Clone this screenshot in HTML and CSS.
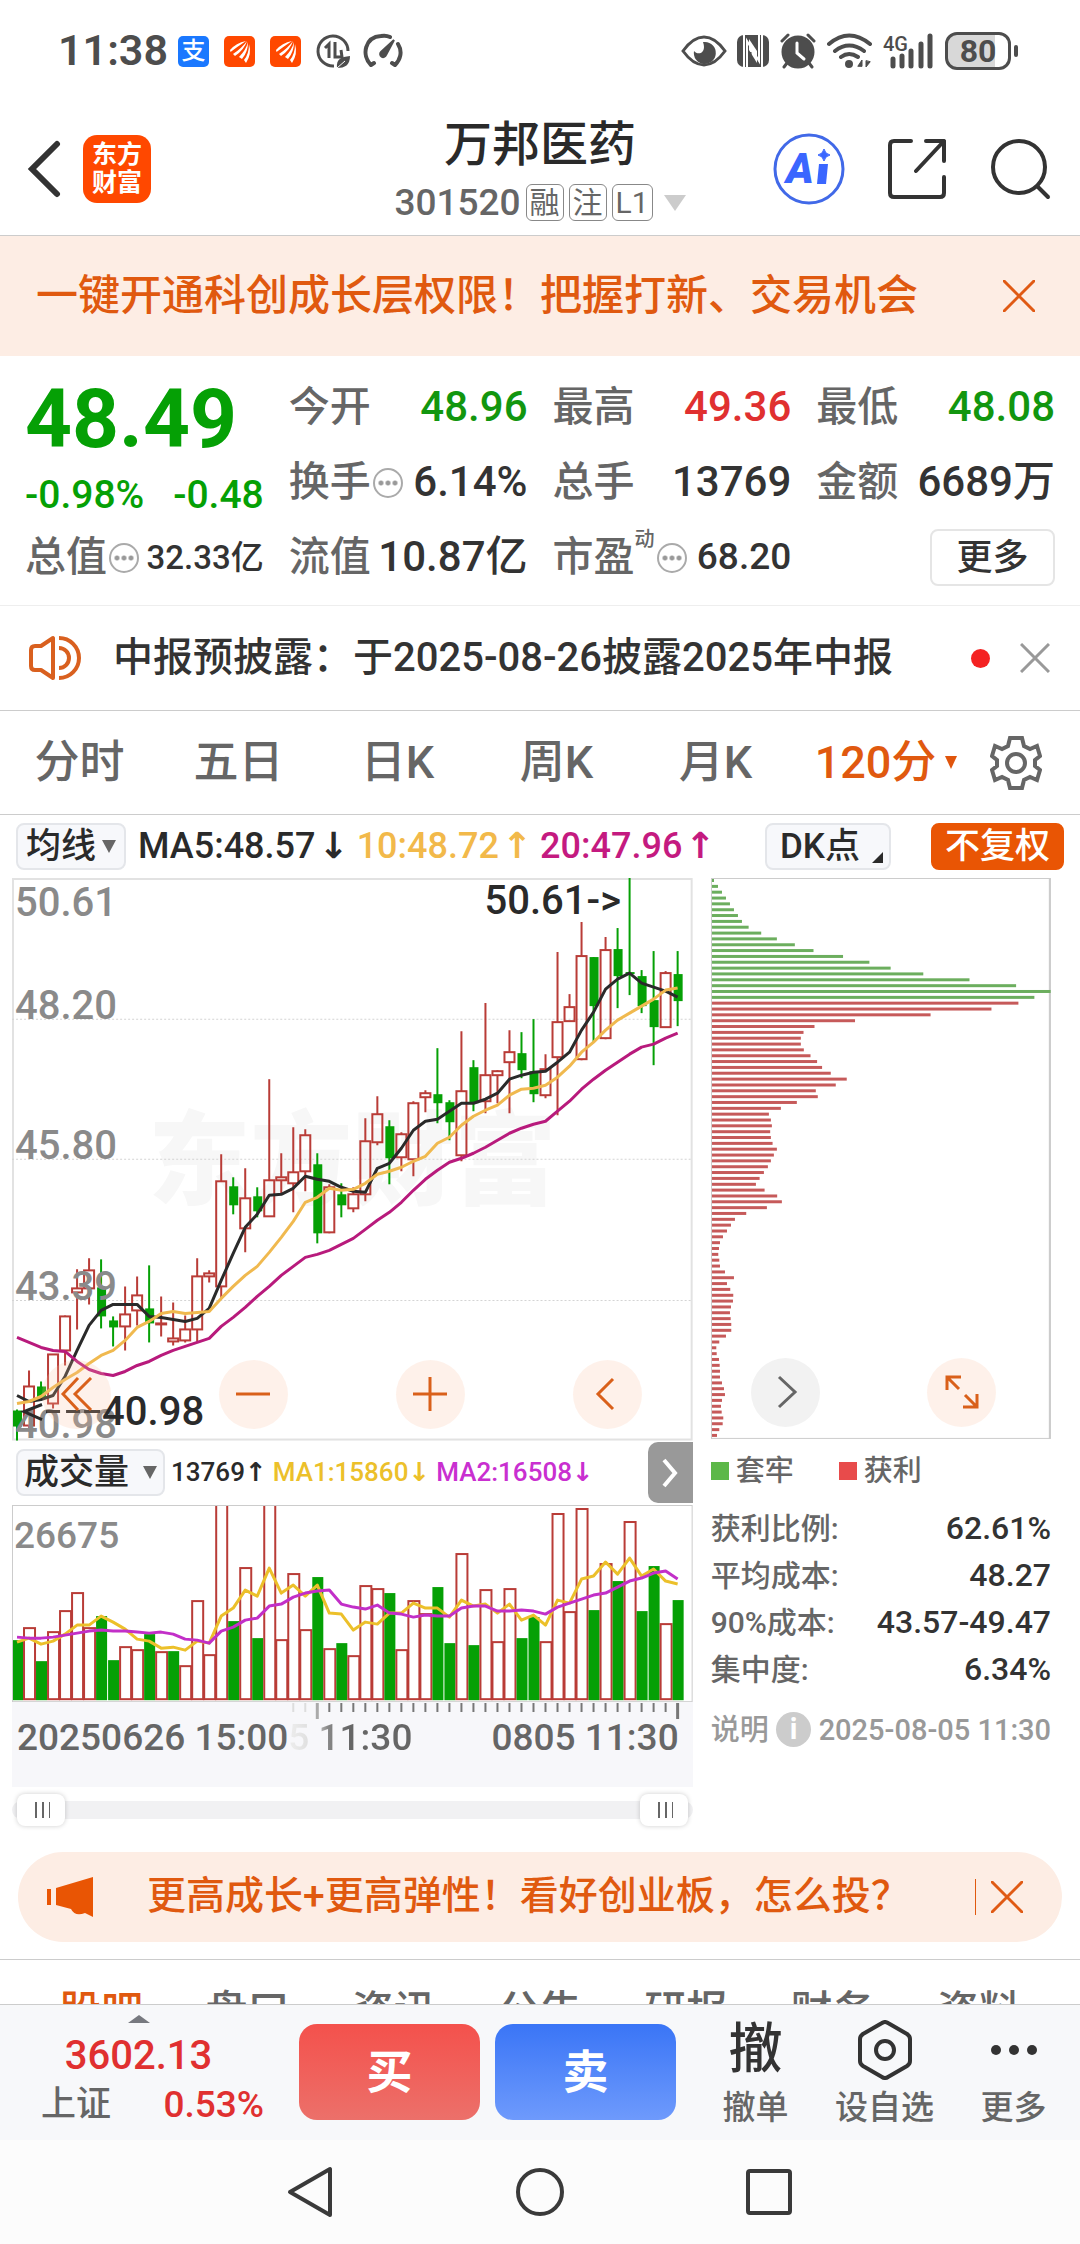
FILE: index.html
```
<!DOCTYPE html>
<html lang="zh-CN">
<head>
    <meta charset="UTF-8">
    <meta name="viewport" content="width=device-width, initial-scale=1.0">
    <title>万邦医药 301520</title>
    <link rel="stylesheet" href="styles.css">
</head>
<body>
    <div class="status-bar">
        <span class="clock">11:38</span>
        <span class="app-dot blue">支</span>
        <svg class="app-dot" width="31" height="31" viewBox="0 0 31 31"><path fill="#fff" d="M6 14Q12 7 22 5Q13 11 6.500 16ZM9 18Q18 12 23 5Q20 14 11 20ZM15 21Q22 14 24 6Q24 16 18 23ZM20 24Q25 18 25 8Q28 18 22 27Z"/></svg>
        <svg class="app-dot" width="31" height="31" viewBox="0 0 31 31"><path fill="#fff" d="M6 14Q12 7 22 5Q13 11 6.500 16ZM9 18Q18 12 23 5Q20 14 11 20ZM15 21Q22 14 24 6Q24 16 18 23ZM20 24Q25 18 25 8Q28 18 22 27Z"/></svg>
        <svg width="36" height="36" viewBox="0 0 36 36" fill="none" stroke="#4d4d4d" stroke-width="3">
            <path d="M32 18A15 15 0 1 0 18 33"/>
            <path d="M9 15L13 11V25M19 9V24H26L25 17" stroke-width="3"/>
            <path d="M21 35C20 26 25 24 34 23C34 32 29 35 21 35Z" fill="#4d4d4d" stroke="none"/>
            <path d="M21 35L29 28" stroke="#fff" stroke-width="1"/>
        </svg>
        <svg width="42" height="36" viewBox="0 0 42 36" fill="none" stroke="#4d4d4d" stroke-width="4" stroke-linecap="round">
            <path d="M9 32C-1 22 3 4 19 3Q24 2 28 4M36 11C41 19 38 27 33 32M9 32L12 30M33 32L30 30"/>
            <path d="M32 7L24 22A3 3 0 1 1 19 19Z" fill="#4d4d4d" stroke-width="2"/>
        </svg>
        <svg class="push" width="46" height="34" viewBox="0 0 46 34">
            <path d="M2 17Q12 3 23 3T44 17Q34 31 23 31T2 17Z" fill="none" stroke="#4d4d4d" stroke-width="3"/>
            <path d="M24 8A11 11 0 1 1 13 17C17 22 26 19 22 8Z" fill="#4d4d4d"/>
        </svg>
        <svg width="32" height="34" viewBox="0 0 32 34">
            <rect x="0" y="1" width="32" height="32" rx="7" fill="#4d4d4d"/>
            <path d="M7 1V33M10 33V7L22 27V1M25 33V1" fill="none" stroke="#fff" stroke-width="2"/>
            <path d="M12 16L20 29V17L12 5Z" fill="#fff"/>
            <path d="M13 18V29" stroke="#4d4d4d" stroke-width="3"/>
        </svg>
        <svg width="38" height="36" viewBox="0 0 38 36" fill="none" stroke="#4d4d4d" stroke-width="3" stroke-linecap="round">
            <circle cx="19" cy="19" r="15" fill="#4d4d4d"/>
            <path d="M3 8L9 2M35 8L29 2M8 30L5 34M30 30L33 34"/>
            <path d="M18 10V20L25 26" stroke="#fff"/>
        </svg>
        <svg width="46" height="36" viewBox="0 0 46 36" fill="none" stroke="#4d4d4d" stroke-width="4" stroke-linecap="round">
            <path d="M2 11Q22 -6 43 11M8 18Q22 7 37 18M14 24Q22 18 31 24"/>
            <circle cx="22" cy="31" r="2"/>
            <path d="M35 33V27L31 33ZM39 28V34L43 29Z" stroke-width="1" fill="#4d4d4d"/>
        </svg>
        <svg width="52" height="36" viewBox="0 0 52 36">
            <text x="0" y="18" class="net">4G</text>
            <path d="M10 26V33M19 23V33M28 18V33M38 11V33M47 3V33" stroke="#4d4d4d" stroke-width="5" stroke-linecap="round"/>
        </svg>
        <span class="battery">80</span>
    </div>

    <header class="header">
        <div class="header-side">
            <button class="icon-btn" aria-label="返回">
                <svg width="34" height="58" viewBox="0 0 34 58" fill="none" stroke="#333" stroke-width="6" stroke-linecap="round"><path d="M30 4L5 29L30 54"/></svg>
            </button>
            <a href="#" class="brand">东方<br>财富</a>
        </div>
        <div class="header-title">
            <h1>万邦医药</h1>
            <div class="code">
                <span>301520</span><span class="badge">融</span><span class="badge">注</span><span class="badge">L1</span>
                <svg width="22" height="16" viewBox="0 0 22 16"><path d="M0 0H22L11 16Z" fill="#ccc"/></svg>
            </div>
        </div>
        <div class="header-side right">
            <button class="icon-btn" aria-label="Ai">
                <svg width="72" height="72" viewBox="0 0 72 72">
                    <circle cx="36" cy="36" r="34" fill="none" stroke="#4169e8" stroke-width="3"/>
                    <text x="13" y="50" class="ai">A</text>
                    <path d="M46 31H55L53 51H44Z" fill="#3a66ff"/>
                    <path d="M51 16Q52 21 57 22Q52 23 51 28Q50 23 45 22Q50 21 51 16Z" fill="#3a66ff" stroke="#3a66ff"/>
                </svg>
            </button>
            <button class="icon-btn" aria-label="分享">
                <svg width="60" height="60" viewBox="0 0 60 60" fill="none" stroke="#333" stroke-width="4" stroke-linecap="round" stroke-linejoin="round"><path d="M23 2H6Q2 2 2 6V54Q2 58 6 58H52Q56 58 56 54V38M38 2H56V22M56 2L28 32"/></svg>
            </button>
            <button class="icon-btn" aria-label="搜索">
                <svg width="60" height="62" viewBox="0 0 60 62" fill="none" stroke="#333" stroke-width="4" stroke-linecap="round"><circle cx="28" cy="29" r="26"/><path d="M47 49L57 59"/></svg>
            </button>
        </div>
    </header>

    <div class="notice">
        <a href="#">一键开通科创成长层权限！把握打新、交易机会</a>
        <button class="icon-btn" aria-label="关闭"><svg width="32" height="32" viewBox="0 0 32 32" stroke="#e05a14" stroke-width="3"><path d="M0 0L32 32M32 0L0 32"/></svg></button>
    </div>

    <section class="quote">
        <div class="price">
            <strong>48.49</strong>
            <div class="change"><span>-0.98%</span><span>-0.48</span></div>
        </div>
        <div class="cell"><span>今开</span><b class="down">48.96</b></div>
        <div class="cell"><span>最高</span><b class="up">49.36</b></div>
        <div class="cell"><span>最低</span><b class="down">48.08</b></div>
        <div class="cell"><span>换手</span><i class="more-dot"></i><b>6.14%</b></div>
        <div class="cell"><span>总手</span><b>13769</b></div>
        <div class="cell"><span>金额</span><b>6689万</b></div>
        <div class="cell"><span>总值</span><i class="more-dot"></i><b class="small">32.33亿</b></div>
        <div class="cell"><span>流值</span><b>10.87亿</b></div>
        <div class="cell"><span>市盈</span><sup>动</sup><i class="more-dot"></i><b class="medium">68.20</b></div>
        <div class="cell"><button class="more">更多</button></div>
    </section>

    <div class="news">
        <svg width="52" height="46" viewBox="0 0 52 46" fill="none" stroke="#d9601f" stroke-width="4"><path d="M24 3V43L12 35H6Q2 35 2 31V15Q2 11 6 11H12L24 3Z" stroke-linejoin="round"/><path d="M30 3A20 20 0 0 1 30 43M30 13A10 10 0 0 1 30 33"/></svg>
        <a href="#">中报预披露：于2025-08-26披露2025年中报</a>
        <span class="dot"></span>
        <button class="icon-btn" aria-label="关闭"><svg width="30" height="30" viewBox="0 0 30 30" stroke="#999" stroke-width="3"><path d="M1 1L29 29M29 1L1 29"/></svg></button>
    </div>

    <nav class="period">
        <button>分时</button>
        <button>五日</button>
        <button>日K</button>
        <button>周K</button>
        <button>月K</button>
        <button class="active">120分<svg width="12" height="13" viewBox="0 0 12 13"><path d="M0 0H12L6 13Z" fill="#e0550c"/></svg></button>
        <button class="gear" aria-label="设置">
            <svg width="52" height="54" viewBox="0 0 52 54" fill="none" stroke="#666" stroke-width="4"><path d="M20 2H32L34 10L40 13L47 10L50 20L45 24V30L50 34L47 44L40 41L34 44L32 52H20L18 44L12 41L5 44L2 34L7 30V24L2 20L5 10L12 13L18 10Z"/><circle cx="26" cy="27" r="9"/></svg>
        </button>
    </nav>

    <div class="indicator">
        <button class="pill">均线<svg width="14" height="13" viewBox="0 0 14 13"><path d="M0 0H14L7 13Z" fill="#666"/></svg></button>
        <span class="ma5">MA5:48.57<i>↓</i></span>
        <span class="ma10">10:48.72<i>↑</i></span>
        <span class="ma20">20:47.96<i>↑</i></span>
        <button class="pill dk">DK点<svg width="11" height="11" viewBox="0 0 11 11"><path d="M11 0V11H0Z" fill="#2a2a2a"/></svg></button>
        <button class="pill adjust">不复权</button>
    </div>

    <main class="charts">
        <div class="left">
            <div class="panel">
                <svg id="kline" viewBox="0 0 680 562"></svg>
                <div class="tools">
                    <button aria-label="最早"><svg width="34" height="34" viewBox="0 0 34 34"><path d="M18 1L3 17L18 33M31 1L15 17L31 33"/></svg></button>
                    <button aria-label="缩小"><svg width="34" height="34" viewBox="0 0 34 34"><path d="M0 17H34"/></svg></button>
                    <button aria-label="放大"><svg width="34" height="34" viewBox="0 0 34 34"><path d="M0 17H34M17 0V34"/></svg></button>
                    <button aria-label="左移"><svg width="34" height="34" viewBox="0 0 34 34"><path d="M23 2L8 17L23 32"/></svg></button>
                </div>
            </div>
            <div class="vol-head">
                <button class="pill">成交量<svg width="14" height="13" viewBox="0 0 14 13"><path d="M0 0H14L7 13Z" fill="#666"/></svg></button>
                <span>13769<i>↑</i></span>
                <span class="vma1">MA1:15860<i>↓</i></span>
                <span class="vma2">MA2:16508<i>↓</i></span>
                <button class="next" aria-label="下一页"><svg width="18" height="30" viewBox="0 0 18 30" fill="none" stroke="#fff" stroke-width="4"><path d="M3 2L14 15L3 28"/></svg></button>
            </div>
            <svg id="volume" viewBox="0 0 680 197"></svg>
            <div class="axis">
                <svg id="ticks" viewBox="0 0 680 17"></svg>
                <div class="dates"><span>20250626 15:00</span><span class="fade">5 11:30</span><span class="last">0805 11:30</span></div>
            </div>
            <div class="range">
                <input type="range" min="0" max="100" value="0" aria-label="开始">
                <input type="range" min="0" max="100" value="100" aria-label="结束">
            </div>
        </div>
        <div class="chips">
            <div class="panel">
                <svg id="chips" viewBox="0 0 341 562"></svg>
                <div class="tools">
                    <button class="gray" aria-label="右移"><svg width="34" height="34" viewBox="0 0 34 34"><path d="M11 2L27 17L11 32"/></svg></button>
                    <button aria-label="全屏"><svg width="34" height="34" viewBox="0 0 34 34"><path d="M2 15V2H16M2 2L14 14M32 19V32H18M32 32L20 20"/></svg></button>
                </div>
            </div>
            <div class="legend"><span class="trapped">套牢</span><span class="profit">获利</span></div>
            <dl>
                <div><dt>获利比例:</dt><dd>62.61%</dd></div>
                <div><dt>平均成本:</dt><dd>48.27</dd></div>
                <div><dt>90%成本:</dt><dd>43.57-49.47</dd></div>
                <div><dt>集中度:</dt><dd>6.34%</dd></div>
            </dl>
            <div class="explain"><a href="#">说明</a><span class="info">i</span><time>2025-08-05 11:30</time></div>
        </div>
    </main>

    <div class="promo">
        <svg width="48" height="40" viewBox="0 0 48 40" fill="#e95504"><path d="M0 12H4V28H0ZM9 11L46 0V40L38 36Q28 40 24 32L9 28Z"/></svg>
        <a href="#">更高成长+更高弹性！看好创业板，怎么投？</a>
        <button class="icon-btn" aria-label="关闭"><svg width="32" height="32" viewBox="0 0 32 32" stroke="#e05a14" stroke-width="3"><path d="M0 0L32 32M32 0L0 32"/></svg></button>
    </div>

    <nav class="sections">
        <a href="#" class="active">股吧</a>
        <a href="#">盘口</a>
        <a href="#">资讯</a>
        <a href="#">公告</a>
        <a href="#">研报</a>
        <a href="#">财务</a>
        <a href="#">资料</a>
    </nav>

    <footer class="trade">
        <div class="index">
            <svg width="22" height="8" viewBox="0 0 22 8"><path d="M0 8H22L11 0Z" fill="#77797f"/></svg>
            <b>3602.13</b>
            <div><span>上证</span><em>0.53%</em></div>
        </div>
        <button class="deal buy">买</button>
        <button class="deal sell">卖</button>
        <button class="action"><span class="glyph">撤</span>撤单</button>
        <button class="action">
            <span class="glyph"><svg width="54" height="60" viewBox="0 0 54 60" fill="none" stroke="#333" stroke-width="4"><path d="M24 3Q27 1 30 3L49 14Q52 16 52 19V41Q52 44 49 46L30 57Q27 59 24 57L5 46Q2 44 2 41V19Q2 16 5 14Z"/><circle cx="27" cy="30" r="9"/></svg></span>设自选
        </button>
        <button class="action">
            <span class="glyph"><svg width="46" height="10" viewBox="0 0 46 10" fill="#333"><circle cx="5" cy="5" r="5"/><circle cx="23" cy="5" r="5"/><circle cx="41" cy="5" r="5"/></svg></span>更多
        </button>
    </footer>

    <div class="sys-nav">
        <button class="icon-btn" aria-label="后退"><svg width="48" height="52" viewBox="0 0 48 52" fill="none" stroke="#3a3a3a" stroke-width="4" stroke-linejoin="round"><path d="M43 3V49L3 26Z"/></svg></button>
        <button class="icon-btn" aria-label="主屏"><svg width="50" height="50" viewBox="0 0 50 50" fill="none" stroke="#3a3a3a" stroke-width="4"><circle cx="25" cy="25" r="22"/></svg></button>
        <button class="icon-btn" aria-label="多任务"><svg width="48" height="48" viewBox="0 0 48 48" fill="none" stroke="#3a3a3a" stroke-width="4"><rect x="3" y="3" width="42" height="42" rx="2"/></svg></button>
    </div>

    <script src="script.js"></script>
</body>
</html>
```

FILE: styles.css
```
* {
    box-sizing: border-box;
}

body {
    display: flex;
    flex-direction: column;
    min-height: 100vh;
    margin: 0;
    background: #fff;
    color: #333;
    font-family: Roboto, "Noto Sans CJK SC", sans-serif;
    font-weight: 500;
    line-height: 1.2;
}

button {
    margin: 0;
    padding: 0;
    border: 0;
    background: none;
    color: inherit;
    font: inherit;
    cursor: pointer;
}

a {
    color: inherit;
    text-decoration: none;
}

i,
em {
    font-style: normal;
}

svg {
    display: block;
    flex: none;
}

.icon-btn {
    display: flex;
}

/* status bar */
.status-bar {
    display: flex;
    align-items: center;
    gap: 10px;
    height: 102px;
    padding: 0 69px 0 58px;
    color: #4d4d4d;
}

.clock {
    font-size: 43px;
    font-weight: 600;
}

.app-dot {
    width: 31px;
    height: 31px;
    margin-right: 5px;
    border-radius: 5px;
    background: #ff4800;
    color: #fff;
    font-size: 24px;
    line-height: 30px;
    text-align: center;
}

.app-dot.blue {
    background: #1a78ff;
}

.push {
    margin-left: auto;
}

.net {
    fill: #4d4d4d;
    font-size: 20px;
}

.battery {
    position: relative;
    width: 66px;
    height: 38px;
    border: 3px solid #4d4d4d;
    border-radius: 12px;
    background: linear-gradient(90deg, #d8d8d8 78%, #fff 78%);
    font-size: 32px;
    font-weight: 700;
    line-height: 32px;
    text-align: center;
}

.battery::after {
    content: "";
    position: absolute;
    top: 10px;
    right: -10px;
    width: 4px;
    height: 12px;
    border-radius: 2px;
    background: #4d4d4d;
}

/* header */
.header {
    display: grid;
    grid-template-columns: 1fr auto 1fr;
    align-items: center;
    height: 134px;
    border-bottom: 1px solid #ccc;
}

.header-side {
    display: flex;
    align-items: center;
    gap: 22px;
    padding-left: 27px;
}

.header-side.right {
    justify-content: flex-end;
    gap: 43px;
    padding: 0 29px 0 0;
}

.brand {
    width: 68px;
    height: 68px;
    padding-top: 6px;
    border-radius: 14px;
    background: #ff4800;
    color: #fff;
    font-size: 25px;
    font-weight: 700;
    line-height: 28px;
    text-align: center;
}

.header-title {
    padding-top: 8px;
}

.header-title h1 {
    margin: 0;
    color: #2a2a2a;
    font-size: 48px;
    font-weight: 500;
    line-height: 60px;
    text-align: center;
}

.code {
    display: flex;
    align-items: center;
    gap: 5px;
    color: #666;
    font-size: 37px;
    line-height: 56px;
}

.code svg {
    margin-left: 6px;
}

.badge {
    min-width: 37px;
    padding: 0 3px;
    border: 1px solid #888;
    border-radius: 6px;
    font-size: 30px;
    font-weight: 400;
    line-height: 35px;
    text-align: center;
}

.ai {
    fill: #3a66ff;
    font-size: 42px;
    font-style: italic;
    font-weight: 900;
}

/* notice */
.notice {
    display: flex;
    align-items: center;
    justify-content: space-between;
    height: 120px;
    padding: 0 45px 0 36px;
    background: #fdede4;
    color: #e0590f;
    font-size: 42px;
}

/* quote */
.quote {
    display: grid;
    grid-template-columns: repeat(4, minmax(0, 1fr));
    grid-auto-rows: 75px;
    column-gap: 25px;
    height: 250px;
    padding: 14px 25px 0;
    border-bottom: 1px solid #eee;
}

.price {
    grid-row: span 2;
    color: #05a005;
}

.price strong {
    display: block;
    font-size: 82px;
    font-weight: 700;
    line-height: 98px;
}

.change {
    display: flex;
    justify-content: space-between;
    font-size: 39px;
    line-height: 54px;
}

.cell {
    display: flex;
    align-items: center;
    color: #666;
    font-size: 41px;
    white-space: nowrap;
}

.cell b {
    margin-left: auto;
    color: #333;
    font-size: 42px;
    font-weight: 500;
}

.cell b.small {
    font-size: 33px;
}

.cell b.medium {
    font-size: 37px;
}

.cell .up {
    color: #e03030;
}

.cell .down {
    color: #12960f;
}

.cell sup {
    align-self: flex-start;
    font-size: 20px;
    line-height: 38px;
}

.more-dot {
    width: 30px;
    height: 30px;
    margin-left: 2px;
    padding: 0 2px;
    border: 2px solid #aaa;
    border-radius: 50%;
    background: radial-gradient(circle, #999 2px, transparent 3px) center / 7px 26px repeat-x;
    background-clip: content-box;
}

.more {
    width: 125px;
    height: 57px;
    margin-left: auto;
    border: 2px solid #e5e5e5;
    border-radius: 8px;
    color: #333;
    font-size: 36px;
    line-height: 50px;
}

/* news */
.news {
    display: flex;
    align-items: center;
    height: 105px;
    padding: 0 30px 0 29px;
    border-bottom: 1px solid #ccc;
    font-size: 40px;
}

.news a {
    margin-left: 32px;
}

.dot {
    width: 19px;
    height: 19px;
    margin: 0 30px 0 auto;
    border-radius: 50%;
    background: #f42222;
}

/* period tabs */
.period {
    display: grid;
    grid-template-columns: repeat(5, 159fr) 182fr 103fr;
    align-items: center;
    height: 104px;
    border-bottom: 1px solid #ccc;
    color: #666;
    font-size: 45px;
}

.period .active {
    display: flex;
    align-items: center;
    justify-content: center;
    gap: 9px;
    color: #e0590f;
}

.gear {
    padding-left: 13px;
}

/* moving averages */
.indicator {
    display: flex;
    align-items: center;
    gap: 8px;
    height: 63px;
    padding: 0 16px;
    color: #2a2a2a;
    font-size: 36px;
    white-space: nowrap;
}

.indicator i {
    margin-left: 3px;
}

.indicator i,
.vol-head i {
    font-family: "DejaVu Sans", sans-serif;
    font-weight: 700;
}

.ma5 {
    margin-left: 4px;
}

.pill {
    display: flex;
    align-items: center;
    gap: 6px;
    height: 47px;
    padding: 0 8px;
    border: 2px solid #e4e6ea;
    border-radius: 8px;
    background: #f7f8fb;
    color: #2a2a2a;
    font-size: 35px;
}

.dk {
    gap: 12px;
    margin-left: auto;
    margin-right: 32px;
    padding-left: 13px;
    padding-right: 6px;
}

.dk svg {
    align-self: flex-end;
    margin-bottom: 5px;
}

.adjust {
    padding: 0 12px;
    border-color: #e95504;
    background: #e95504;
    color: #fff;
}

.ma10 {
    color: #f2b94a;
}

.ma20 {
    color: #c41a80;
}

/* charts */
.charts {
    display: grid;
    grid-template-columns: 2fr 1fr;
    column-gap: 18px;
    padding: 0 29px 0 12px;
}

.panel {
    position: relative;
}

.panel > svg,
#volume,
#ticks {
    width: 100%;
    height: auto;
}

.tools {
    position: absolute;
    right: 0;
    bottom: 12px;
    left: 0;
    display: flex;
    justify-content: space-between;
    padding: 0 51px 0 30px;
}

.tools button {
    display: flex;
    align-items: center;
    justify-content: center;
    width: 69px;
    height: 69px;
    border-radius: 50%;
    background: rgba(250, 190, 160, 0.22);
}

.tools svg {
    fill: none;
    stroke: #d9601a;
    stroke-width: 3;
}

.chips .tools {
    padding: 0 55px 0 40px;
}

.tools .gray {
    background: #f2f2f2;
}

.tools .gray svg {
    stroke: #666;
}

.scale {
    fill: #8a8a8a;
    font-size: 40px;
}

.peak {
    fill: #2a2a2a;
    font-size: 40px;
}

.volume-max {
    fill: #8a8a8a;
    font-size: 37px;
}

.watermark {
    fill: #f7f7f7;
    font-size: 102px;
    font-weight: 900;
}

.vol-head {
    display: flex;
    align-items: center;
    gap: 6px;
    height: 64px;
    padding-left: 4px;
    color: #2a2a2a;
    font-size: 26px;
    white-space: nowrap;
}

.vol-head .pill {
    gap: 14px;
    padding: 0 6px;
}

.vma1 {
    color: #ecc02a;
}

.vma2 {
    color: #c92fd0;
}

.next {
    display: flex;
    align-items: center;
    justify-content: center;
    width: 45px;
    height: 61px;
    margin-left: auto;
    border-radius: 10px 0 0 10px;
    background: #999;
}

.axis {
    height: 85px;
    padding-top: 1px;
    background: #f7f7fa;
}

.dates {
    display: flex;
    padding: 0 14px 0 5px;
    color: #666;
    font-size: 37px;
    line-height: 36px;
    white-space: nowrap;
}

.fade {
    background: linear-gradient(90deg, #eee 0, #ddd 24px, #888 40px, #666 60px);
    background-clip: text;
    color: transparent;
}

.last {
    margin-left: auto;
}

.range {
    position: relative;
    height: 18px;
    margin: 14px 0 33px;
    border-radius: 9px;
    background: #f1f1f3;
}

.range input {
    position: absolute;
    top: -7px;
    left: 5px;
    width: calc(100% - 10px);
    height: 32px;
    margin: 0;
    background: none;
    appearance: none;
    pointer-events: none;
}

.range input::-webkit-slider-thumb {
    width: 48px;
    height: 32px;
    padding: 0 15px 0 16px;
    border: 0;
    border-radius: 8px;
    background: linear-gradient(90deg, #666 2px, transparent 2px) 16px center / 7px 16px repeat-x content-box, #fff;
    box-shadow: 0 0 5px rgba(0, 0, 0, 0.2);
    box-sizing: border-box;
    appearance: none;
    pointer-events: auto;
}

/* chip distribution */
.legend {
    display: flex;
    height: 66px;
    color: #666;
    font-size: 29px;
    line-height: 64px;
}

.legend span {
    display: flex;
    align-items: center;
    gap: 7px;
    width: 128px;
    height: 64px;
}

.legend span::before {
    content: "";
    width: 18px;
    height: 18px;
    background: #5cb848;
}

.legend .profit::before {
    background: #e84b4b;
}

.chips dl {
    margin: 0;
    line-height: 47px;
}

.chips dl div {
    display: flex;
    justify-content: space-between;
}

.chips dt {
    color: #666;
    font-size: 30px;
}

.chips dd {
    margin: 0;
    font-size: 32px;
}

.explain {
    display: flex;
    align-items: center;
    justify-content: space-between;
    height: 74px;
    color: #999;
    font-size: 29px;
    white-space: nowrap;
}

.info {
    width: 35px;
    height: 35px;
    border-radius: 50%;
    background: #ccc;
    color: #fff;
    font-weight: 700;
    line-height: 35px;
    text-align: center;
}

/* promo */
.promo {
    display: flex;
    align-items: center;
    height: 90px;
    margin: 0 18px 17px;
    padding: 0 39px 0 29px;
    border-radius: 45px;
    background: #fdede4;
    color: #e0590f;
    font-size: 39px;
    white-space: nowrap;
}

.promo a {
    margin-left: 52px;
}

.promo .icon-btn {
    margin-left: auto;
    padding: 2px 0 2px 15px;
    border-left: 1px solid #e0590f;
}

.sections {
    display: flex;
    height: 45px;
    padding: 25px 28px 0;
    border-top: 1px solid #ccc;
    color: #666;
    font-size: 42px;
    line-height: 54px;
    overflow: hidden;
}

.sections a {
    flex: 1;
    text-align: center;
}

.sections .active {
    color: #e0590f;
}

/* trade bar */
.trade {
    display: flex;
    align-items: center;
    height: 136px;
    padding-right: 2px;
    border-top: 1px solid #ccc;
    background: #f7f8fa;
}

.index {
    display: flex;
    flex: 1;
    flex-direction: column;
    align-items: center;
    align-self: flex-start;
    padding: 10px 35px 0 41px;
    color: #e03030;
}

.index svg,
.index b {
    margin-right: 28px;
}

.index b {
    margin-top: 9px;
    font-size: 40px;
    font-weight: 500;
    line-height: 48px;
}

.index div {
    display: flex;
    justify-content: space-between;
    width: 100%;
    font-size: 37px;
    line-height: 50px;
}

.index span {
    color: #666;
    font-size: 35px;
}

.deal {
    width: 181px;
    height: 96px;
    margin-right: 15px;
    border-radius: 18px;
    color: #fff;
    font-size: 46px;
    font-weight: 700;
}

.buy {
    background: linear-gradient(#f4514c, #ec706a);
}

.sell {
    background: linear-gradient(#3a75f6, #6e9afc);
}

.action {
    display: flex;
    flex-direction: column;
    align-items: center;
    width: 129px;
    color: #666;
    font-size: 33px;
    line-height: 44px;
}

.glyph {
    display: flex;
    align-items: center;
    justify-content: center;
    height: 72px;
    color: #333;
    font-size: 54px;
}

/* system navigation */
.sys-nav {
    display: flex;
    flex: 1;
    align-items: center;
    justify-content: space-between;
    min-height: 104px;
    padding: 0 287px;
    background: #fcfcfc;
}
```

FILE: script.js
```
const RED = '#b93c37';
const GREEN = '#05a005';

// [high, body top, body bottom, low, rising]; levels run from 22 (50.61) to 1540 (40.98)
const candles = [
    [1460, 1462, 1505, 1543, 0], [1352, 1396, 1502, 1517, 1], [1382, 1396, 1428, 1435, 0], [1309, 1310, 1443, 1455, 1],
    [1205, 1206, 1298, 1340, 1], [1081, 1132, 1143, 1241, 1], [1051, 1082, 1132, 1175, 1], [1054, 1130, 1207, 1240, 0],
    [1208, 1219, 1238, 1287, 0], [1125, 1202, 1233, 1300, 1], [1098, 1151, 1192, 1232, 1], [1070, 1185, 1225, 1278, 0],
    [1154, 1226, 1228, 1260, 1], [1168, 1267, 1274, 1285, 1], [1204, 1241, 1272, 1278, 1], [1049, 1100, 1242, 1275, 1],
    [1084, 1092, 1100, 1116, 1], [770, 842, 1125, 1158, 1], [830, 855, 908, 932, 0], [806, 889, 970, 1034, 1],
    [857, 882, 924, 938, 0], [565, 838, 936, 936, 1], [766, 830, 840, 875, 1], [695, 818, 847, 927, 1],
    [701, 717, 814, 868, 1], [766, 797, 982, 1010, 0], [850, 858, 980, 983, 1], [846, 876, 907, 939, 0],
    [857, 876, 916, 926, 1], [671, 733, 878, 897, 1], [611, 661, 736, 745, 1], [676, 692, 780, 850, 0],
    [708, 716, 776, 815, 1], [625, 632, 782, 829, 1], [596, 604, 614, 656, 1], [481, 607, 630, 686, 0],
    [624, 627, 683, 731, 0], [435, 598, 771, 788, 1], [515, 533, 632, 653, 0], [359, 554, 625, 658, 1],
    [542, 544, 555, 630, 1], [433, 494, 520, 658, 1], [438, 496, 541, 563, 0], [404, 545, 606, 627, 0],
    [497, 540, 609, 618, 1], [222, 411, 506, 662, 1], [336, 372, 409, 410, 1], [141, 234, 511, 514, 1],
    [235, 237, 367, 465, 0], [181, 217, 455, 458, 1], [157, 215, 287, 373, 0], [22, 276, 281, 338, 0],
    [270, 288, 367, 387, 0], [219, 353, 426, 527, 0], [274, 280, 425, 426, 1], [219, 283, 356, 422, 0]
];
const ma5 = [1422, 1437, 1432, 1420, 1370, 1300, 1232, 1190, 1176, 1174, 1176, 1206, 1210, 1215, 1222, 1212, 1186, 1110, 1037, 966, 932, 881, 877, 860, 827, 836, 841, 857, 869, 872, 807, 792, 752, 704, 679, 673, 653, 630, 631, 621, 603, 566, 554, 548, 545, 519, 493, 434, 384, 321, 296, 279, 305, 317, 329, 343];
const ma10 = [1442, 1436, 1423, 1400, 1378, 1358, 1335, 1312, 1298, 1273, 1238, 1220, 1199, 1194, 1198, 1196, 1194, 1158, 1127, 1096, 1073, 1035, 993, 949, 898, 884, 861, 867, 864, 847, 822, 815, 804, 788, 774, 740, 723, 690, 666, 649, 636, 609, 592, 590, 583, 561, 530, 492, 465, 433, 407, 387, 369, 350, 326, 320];
const ma20 = [1263, 1277, 1291, 1298, 1303, 1328, 1351, 1361, 1368, 1356, 1341, 1328, 1312, 1298, 1288, 1278, 1266, 1235, 1211, 1182, 1154, 1126, 1096, 1071, 1047, 1039, 1028, 1013, 996, 972, 947, 925, 899, 867, 836, 812, 791, 779, 765, 749, 731, 713, 699, 688, 679, 652, 626, 592, 567, 542, 521, 497, 480, 470, 455, 441];

// volume levels run from 223 (panel top) to 807 (zero)
const volumes = [627, 590, 692, 600, 539, 484, 588, 556, 687, 645, 654, 611, 661, 662, 704, 508, 671, 200, 570, 408, 621, 200, 626, 427, 595, 438, 651, 638, 673, 463, 472, 486, 656, 508, 546, 468, 637, 368, 642, 474, 630, 472, 621, 558, 632, 248, 541, 233, 537, 397, 452, 272, 540, 405, 577, 507];
const falling = [0, 2, 7, 8, 11, 13, 18, 20, 25, 27, 31, 35, 36, 38, 42, 43, 48, 50, 52, 53, 55];
const vma1 = [633, 622, 640, 630, 610, 582, 582, 556, 574, 595, 626, 630, 652, 648, 658, 632, 638, 556, 532, 479, 497, 411, 488, 462, 497, 463, 547, 550, 598, 573, 579, 547, 547, 516, 533, 533, 560, 508, 526, 520, 548, 520, 568, 552, 582, 508, 518, 444, 436, 394, 431, 381, 437, 414, 450, 460];
const vma2 = [620, 621, 623, 620, 613, 606, 600, 599, 601, 602, 604, 606, 603, 609, 626, 629, 636, 602, 589, 569, 563, 527, 519, 499, 488, 482, 479, 520, 530, 535, 522, 547, 550, 558, 553, 556, 555, 531, 525, 525, 541, 541, 537, 541, 550, 529, 518, 505, 494, 487, 468, 451, 441, 426, 421, 444];

// chip amount at each price step, from the high down; the first 21 are above the close
const chips = [6, 18, 30, 42, 54, 66, 78, 90, 110, 148, 195, 249, 305, 394, 473, 537, 635, 774, 914, 1018, 969,
    921, 840, 657, 430, 308, 275, 267, 267, 276, 296, 316, 331, 357, 405, 372, 312, 318, 255, 207, 171, 177, 180, 175, 177, 182, 195, 186, 177, 168, 156, 143, 132, 158, 196, 210, 165, 103, 69, 57, 45, 33, 24, 21, 19, 22, 24, 39, 66, 45, 55, 64, 63, 57, 54, 56, 58, 58, 42, 22, 13, 14, 21, 23, 24, 24, 30, 36, 39, 30, 27, 29, 34, 32, 22, 15];

const x = i => 5 + 12 * i;

function polyline(values, y, color) {
    const points = values.map((v, i) => `${x(i)},${y(v).toFixed(1)}`).join(' ');
    return `<polyline points="${points}" fill="none" stroke="${color}" stroke-width="3" stroke-linejoin="round"/>`;
}

function drawKline() {
    const y = v => Math.round((v - 22) * 561 / 1518);
    let out = '<text class="watermark" x="136" y="319">东方财富</text>';
    out += '<rect x="1" y="1" width="678" height="560" fill="none" stroke="#e2e2e2" stroke-width="2"/>';
    [141, 281, 422].forEach(line => {
        out += `<path d="M0 ${line}H680" stroke="#d4d4d4" stroke-dasharray="2 2"/>`;
    });
    candles.forEach(([high, top, bottom, low, up], i) => {
        const color = up ? RED : GREEN;
        const height = Math.max(y(bottom) - y(top), 1);
        if (up) {
            out += `<path d="M${x(i)} ${y(high)}V${y(top)}M${x(i)} ${y(bottom)}V${y(low)}" stroke="${color}" stroke-width="2"/>`;
            out += `<rect x="${x(i) - 5}" y="${y(top)}" width="10" height="${height}" fill="none" stroke="${color}" stroke-width="2"/>`;
        } else {
            out += `<path d="M${x(i)} ${y(high)}V${y(low)}" stroke="${color}" stroke-width="2"/>`;
            out += `<rect x="${x(i) - 4}" y="${y(top)}" width="9" height="${height}" fill="${color}"/>`;
        }
    });
    out += polyline(ma5, y, '#2a2a2a') + polyline(ma10, y, '#f0b94f') + polyline(ma20, y, '#b81a7c');
    [['50.61', 38], ['48.20', 141], ['45.80', 281], ['43.39', 422], ['40.98', 559]].forEach(([label, base]) => {
        out += `<text class="scale" x="3" y="${base}">${label}</text>`;
    });
    out += '<text class="peak" x="472" y="36">50.61-&gt;</text>';
    out += '<path d="M30 526L12 533L30 541M34 533H48M54 533H68M72 533H88" fill="none" stroke="#2a2a2a" stroke-width="3"/>';
    out += '<text class="peak" x="90" y="546">40.98</text>';
    document.getElementById('kline').innerHTML = out;
}

function drawVolume() {
    const y = v => Math.max(Math.round((v - 223) / 3), -4);
    let out = '';
    volumes.forEach((v, i) => {
        const height = 195 - y(v);
        if (falling.includes(i)) {
            out += `<rect x="${x(i) - 5}" y="${y(v)}" width="11" height="${height}" fill="${GREEN}"/>`;
        } else {
            out += `<rect x="${x(i) - 5}" y="${y(v) + 1}" width="11" height="${height - 2}" fill="none" stroke="${RED}" stroke-width="2"/>`;
        }
    });
    out += polyline(vma1, y, '#ecc02a') + polyline(vma2, y, '#c22fc8');
    out += '<rect x="0.500" y="0.500" width="679" height="196" fill="none" stroke="#ccc"/>';
    out += '<text class="volume-max" x="2" y="43">26675</text>';
    document.getElementById('volume').innerHTML = out;
}

function drawTicks() {
    let out = '';
    for (let i = 23; i < 56; i++) {
        const major = i === 25 || i === 55;
        const color = i < 25 ? '#ddd' : i === 25 ? '#aaa' : '#777';
        out += `<path d="M${x(i)} 0V${major ? 16 : 9}" stroke="${color}" stroke-width="${major ? 3 : 2}"/>`;
    }
    document.getElementById('ticks').innerHTML = out;
}

function drawChips() {
    let out = '<path d="M0 0.500H340V561.500H0" fill="none" stroke="#ccc"/><path d="M339.500 0V562" stroke="#ccc" stroke-width="2"/><path d="M0.500 0V562" stroke="#ccc"/>';
    chips.forEach((w, i) => {
        out += `<rect x="1" y="${(1 + 5.853 * i).toFixed(1)}" width="${(w / 3).toFixed(1)}" height="3" fill="${i < 21 ? '#6cae5e' : '#c65a5a'}"/>`;
    });
    document.getElementById('chips').innerHTML = out;
}

drawKline();
drawVolume();
drawTicks();
drawChips();
```
